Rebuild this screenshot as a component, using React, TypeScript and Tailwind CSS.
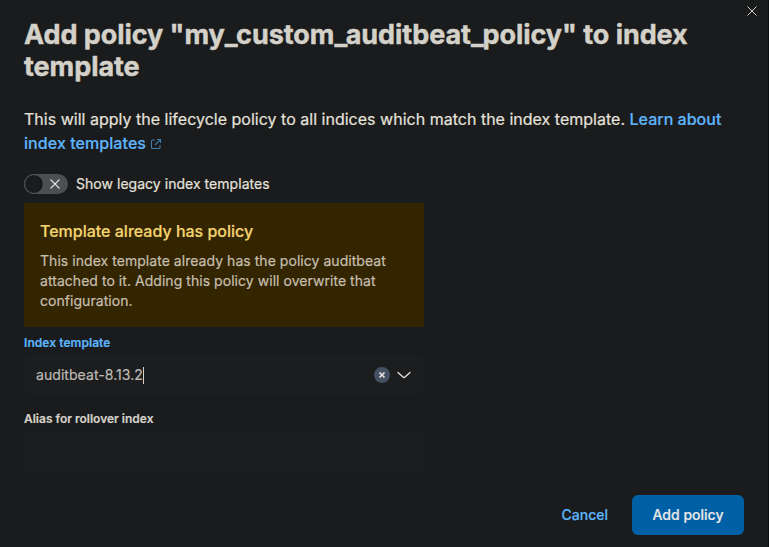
import React from "react";

export default function App() {
  return (
    <div className="relative flex h-[547px] w-[769px] flex-col overflow-hidden border-r border-[#0b0c0e] bg-[#1a1b1d] pl-6 font-['Inter',sans-serif] text-[#e5e2dc] [-webkit-text-stroke:0.2px]">
      <span className="absolute -right-px top-[17px] h-[5px] w-px bg-[#55575a]" />
      <svg className="absolute left-[747px] top-[6px] h-[10px] w-[10px]" viewBox="0 0 10 10" fill="none" stroke="#d4d1c9" strokeWidth="1">
        <path d="M.5.5l9 9M9.500.5l-9 9" />
      </svg>
      <h1 className="mt-[19px] w-[720px] text-[27px] font-bold leading-8 tracking-[-0.06px] text-[#d4d1c9] [-webkit-text-stroke:0.45px]">
        Add policy "my<span className="tracking-[-1.5px]">_</span>custom<span className="tracking-[-1.5px]">_</span>auditbeat<span className="tracking-[-1.2px]">_</span>policy" to index<br />template
      </h1>
      <p className="mt-6 whitespace-nowrap text-base leading-6 tracking-[0.01px]">
        This will apply the lifecycle policy to all indices which match the index template.{" "}
        <span className="font-medium text-[#5eb5fa]">
          Learn about<br /><span className="tracking-[0.07px]">index templates</span>
          <svg className="ml-1 inline h-3 w-3 align-[-1px] text-[#417ba8]" viewBox="0 0 12 12" fill="none" stroke="currentColor" strokeWidth="1.1">
            <path d="M5 2H2.500Q1.500 2 1.500 3v6.500q0 1 1 1H9q1 0 1-1V7M7 1.500h3.500V5M10.500 1.500 5 7" />
          </svg>
        </span>
      </p>
      <div className="mt-[19px] flex h-5 items-center gap-2">
        <div className="flex h-5 w-11 items-center rounded-full bg-[#4a4f52]">
          <span className="h-5 w-5 rounded-full border border-[#565b5e] bg-[#1a1b1d]" />
          <svg className="ml-[6px] h-[10px] w-[10px]" viewBox="0 0 10 10" fill="none" stroke="#e5e2dc" strokeWidth="1.1"><path d="M.5.5l9 9M9.500.5l-9 9" /></svg>
        </div>
        <span className="text-sm tracking-[0.035px]">Show legacy index templates</span>
      </div>
      <section className="mt-[9px] h-[124px] w-[400px] bg-[#332500] px-4 pt-4">
        <h2 className="text-base font-medium leading-6 text-[#f3d371]">Template already has policy</h2>
        <p className="mt-2 text-sm leading-5 tracking-[0.045px] text-[#c6bfaf]">
          This index template already has the policy auditbeat<br />attached to it. Adding this policy will overwrite that<br />configuration.
        </p>
      </section>
      <label className="mt-2 text-xs font-semibold leading-4 tracking-[0.06px] text-[#5eb5fa]">Index template</label>
      <div className="mt-1 flex h-10 w-[400px] items-center rounded-md bg-[#1c1d1f] pl-3 pr-[13px]">
        <span className="text-sm tracking-[0.06px] text-[#bdbab3]">auditbeat-8.13.2</span>
        <span className="h-[17px] w-px bg-[#d4d1c9]" />
        <span className="ml-auto flex h-4 w-4 items-center justify-center rounded-full bg-[#465063]">
          <svg className="h-2 w-2" viewBox="0 0 8 8" fill="none" stroke="#e5e2dc" strokeWidth="1.7"><path d="M1.500 1.500l5 5M6.500 1.500l-5 5" /></svg>
        </span>
        <svg className="ml-[7px] h-2 w-[14px]" viewBox="0 0 14 8" fill="none" stroke="#e5e2dc" strokeWidth="1.3" strokeLinecap="round" strokeLinejoin="round"><path d="M1 1.500l5.300 4.700q.7.600 1.400 0L13 1.500" /></svg>
      </div>
      <label className="mt-4 text-xs font-semibold leading-4 text-[#d4d1c9]">Alias for rollover index</label>
      <div className="mt-1 h-10 w-[400px] rounded-md bg-[#1c1d1f]" />
      <footer className="mt-6 flex h-10 items-center justify-end gap-6 pr-6 text-sm font-medium">
        <span className="text-[#5eb5fa]">Cancel</span>
        <button className="h-10 w-28 rounded-md bg-[#0060a6] text-[#e8e8e8]">Add policy</button>
      </footer>
    </div>
  );
}
